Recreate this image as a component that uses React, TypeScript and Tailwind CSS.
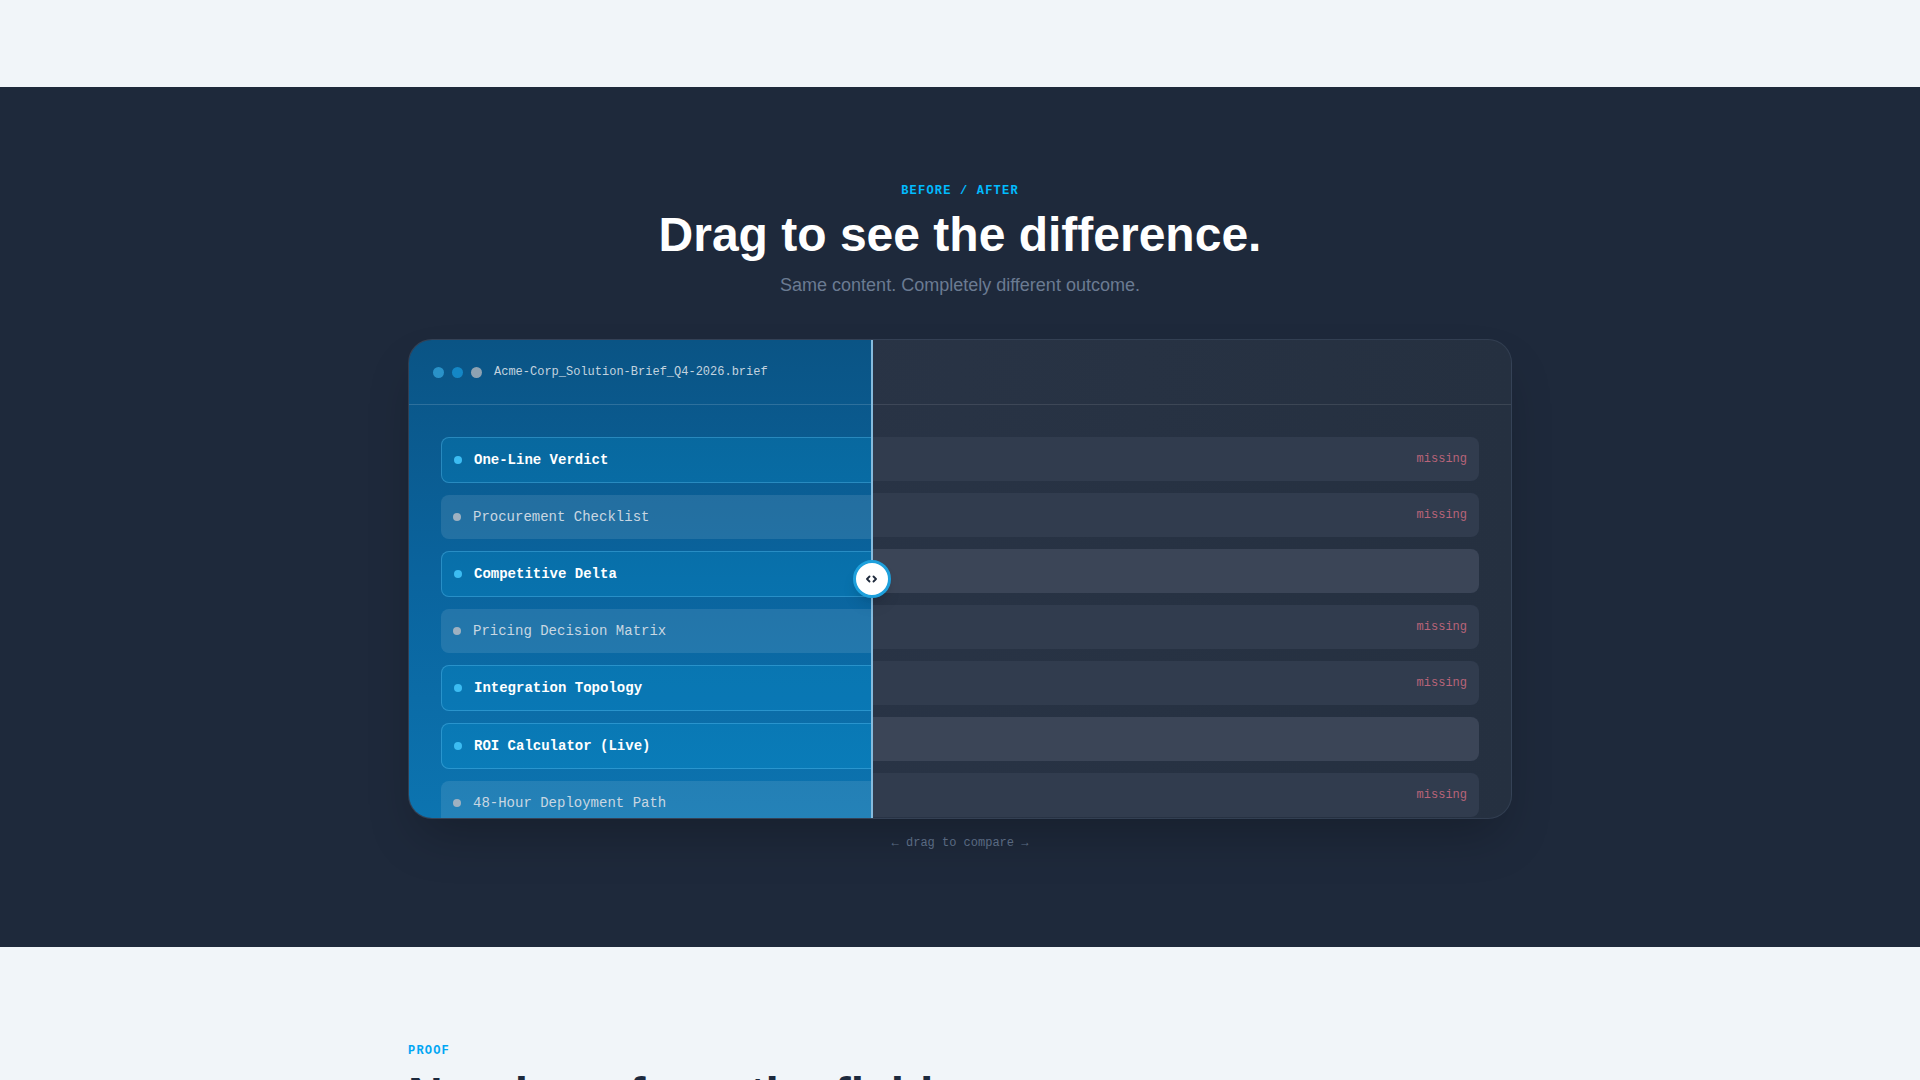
const sections = [
  { title: "One-Line Verdict", strong: true, present: false },
  { title: "Procurement Checklist", strong: false, present: false },
  { title: "Competitive Delta", strong: true, present: true },
  { title: "Pricing Decision Matrix", strong: false, present: false },
  { title: "Integration Topology", strong: true, present: false },
  { title: "ROI Calculator (Live)", strong: true, present: true },
  { title: "48-Hour Deployment Path", strong: false, present: false },
];

const mono = "font-['Liberation_Mono','DejaVu_Sans_Mono',monospace]";

function WindowDots() {
  return (
    <div className="flex items-center gap-2">
      <span className="size-[11px] rounded-full bg-[#2a92c8]" />
      <span className="size-[11px] rounded-full bg-[#1487c6]" />
      <span className="size-[11px] rounded-full bg-[#8ea2b2]" />
    </div>
  );
}

function BeforePane() {
  return (
    <div className="flex h-full flex-col">
      <div className="h-[65px] shrink-0 border-b border-white/10" />
      <div className="flex flex-col gap-3 px-8 pt-8">
        {sections.map((s) => (
          <div
            key={s.title}
            className={`flex h-11 shrink-0 items-center justify-end rounded-lg pr-3 ${
              s.present ? "bg-[#3b4557]" : "bg-[#313c4e]"
            }`}
          >
            {!s.present && <span className={`${mono} text-xs text-[#b96479]`}>missing</span>}
          </div>
        ))}
      </div>
    </div>
  );
}

function AfterPane() {
  return (
    <div className="flex h-full w-[1102px] flex-col">
      <div className="flex h-[65px] shrink-0 items-center gap-3 border-b border-white/15 px-6">
        <WindowDots />
        <span className={`${mono} text-xs text-[#c3d3df]`}>Acme-Corp_Solution-Brief_Q4-2026.brief</span>
      </div>
      <div className="flex flex-col gap-3 px-8 pt-8">
        {sections.map((s) =>
          s.strong ? (
            <div
              key={s.title}
              className="flex shrink-0 items-center gap-3 rounded-lg border border-sky-300/30 bg-sky-400/15 px-3 py-3"
            >
              <span className="size-2 rounded-full bg-[#3cbcf2]" />
              <span className={`${mono} text-sm font-bold text-white`}>{s.title}</span>
            </div>
          ) : (
            <div key={s.title} className="flex shrink-0 items-center gap-3 rounded-lg bg-white/10 px-3 py-3">
              <span className="size-2 rounded-full bg-[#9fb1c1]" />
              <span className={`${mono} text-sm text-[#c9d7e2]`}>{s.title}</span>
            </div>
          )
        )}
      </div>
    </div>
  );
}

function CompareSlider() {
  return (
    <div className="relative mt-10 h-[480px] overflow-hidden rounded-3xl border border-slate-600/40 bg-linear-to-r from-[#2b3649] to-[#253040] shadow-2xl">
      <BeforePane />
      <div className="absolute inset-y-0 left-0 w-[42%] overflow-hidden bg-linear-to-b from-[#0a5485] via-[#0a649e] to-[#0c74b0]">
        <AfterPane />
      </div>
      <div className="absolute inset-y-0 left-[42%] w-[2px] -translate-x-1/2 bg-[#86bbdd]" />
      <div className="absolute left-[42%] top-1/2 flex size-[38px] -translate-x-1/2 -translate-y-1/2 items-center justify-center rounded-full border-[3px] border-[#1ea0dc] bg-white shadow-lg">
        <svg width="11" height="8" viewBox="0 0 11 8" fill="none" stroke="#1e293b" strokeWidth="1.8" strokeLinecap="round" strokeLinejoin="round">
          <path d="M3.5 1.5 1 4l2.5 2.5" />
          <path d="M7.5 1.5 10 4 7.5 6.5" />
        </svg>
      </div>
    </div>
  );
}

export default function App() {
  return (
    <div className="min-h-screen bg-[#f1f5f9] font-['Liberation_Sans',Arial,sans-serif]">
      <div className="h-[87px]" />
      <section className="bg-[#1e293b] pt-24 pb-24">
        <div className="mx-auto max-w-6xl px-6">
          <p className={`${mono} text-center text-xs leading-4 font-bold tracking-[0.1em] text-sky-400`}>
            BEFORE / AFTER
          </p>
          <h2 className="mt-3 text-center text-5xl leading-none font-bold text-white">
            Drag to see the difference.
          </h2>
          <p className="mt-3 text-center text-lg text-[#6b7b92]">Same content. Completely different outcome.</p>
          <CompareSlider />
          <p className={`${mono} mt-4 text-center text-xs leading-4 text-slate-500`}>← drag to compare →</p>
        </div>
      </section>
      <section className="pt-24">
        <div className="mx-auto max-w-6xl px-6">
          <p className={`${mono} text-xs leading-4 font-bold tracking-[0.1em] text-sky-500`}>PROOF</p>
          <h2 className="mt-3 text-5xl leading-none font-bold text-slate-800">Numbers from the field.</h2>
        </div>
      </section>
    </div>
  );
}
